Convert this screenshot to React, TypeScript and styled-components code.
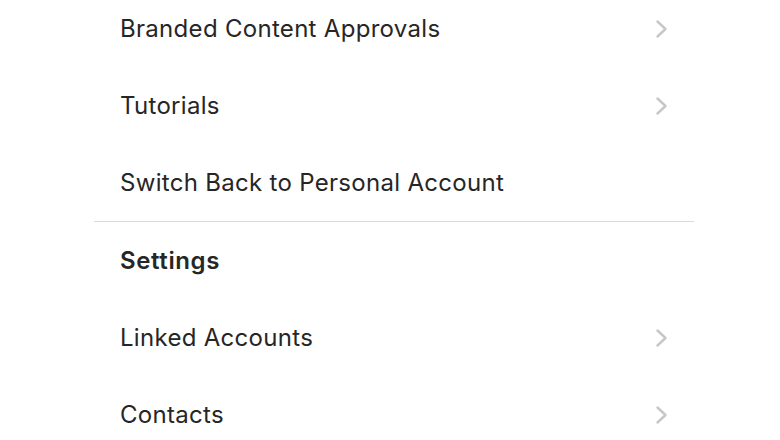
import React from "react";
import styled, { createGlobalStyle } from "styled-components";

const Global = createGlobalStyle`
  html, body { margin: 0; padding: 0; background: #ffffff; }
  body { font-family: Inter, "Noto Sans", sans-serif; -webkit-font-smoothing: antialiased; }
`;

const Page = styled.div`
  width: 780px;
  height: 440px;
  overflow: hidden;
  background: #fff;
`;

const List = styled.div`
  width: 600px;
  margin: -10px 0 0 94px;
  display: flex;
  flex-direction: column;
`;

const Row = styled.div<{ $bold?: boolean }>`
  height: 77px;
  padding: 0 26px;
  display: flex;
  align-items: center;
  justify-content: space-between;
  font-size: 24px;
  font-weight: ${(p) => (p.$bold ? 600 : 400)};
  color: #262626;
  letter-spacing: ${(p) => (p.$bold ? "0.6px" : "0.3px")};
`;

const Divider = styled.div`
  height: 1px;
  background: #dbdbdb;
`;

const Chevron = () => (
  <svg width="14" height="20" viewBox="0 0 14 20" fill="none">
    <path d="M3.5 2.5 L11.5 10 L3.5 17.5" stroke="#c7c7c7" strokeWidth="2.4" strokeLinecap="round" strokeLinejoin="round" />
  </svg>
);

type Item = { label: string; chevron?: boolean; bold?: boolean };

const top: Item[] = [
  { label: "Branded Content Approvals", chevron: true },
  { label: "Tutorials", chevron: true },
  { label: "Switch Back to Personal Account" },
];
const bottom: Item[] = [
  { label: "Settings", bold: true },
  { label: "Linked Accounts", chevron: true },
  { label: "Contacts", chevron: true },
];

const renderRow = (i: Item) => (
  <Row key={i.label} $bold={i.bold}>
    <span>{i.label}</span>
    {i.chevron && <Chevron />}
  </Row>
);

export default function App() {
  return (
    <Page>
      <Global />
      <List>
        {top.map(renderRow)}
        <Divider />
        {bottom.map(renderRow)}
      </List>
    </Page>
  );
}
